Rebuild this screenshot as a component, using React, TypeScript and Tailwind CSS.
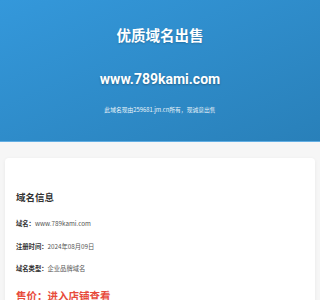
export default function App() {
  const info = [
    { label: '域名：', value: 'www.789kami.com' },
    { label: '注册时间：', value: '2024年08月09日' },
    { label: '域名类型：', value: '企业品牌域名' },
  ];

  return (
    <div className="min-h-screen bg-[#f6f6f6] font-['Noto_Sans_CJK_SC',sans-serif]">
      <header className="h-[142px] flex flex-col items-center pt-[27px] text-white bg-gradient-to-br from-[#3498db] to-[#2980b9] border-b border-[#62aee3]">
        <h1 className="text-[14.5px] leading-[16px] font-bold [text-shadow:0_1px_2px_rgba(0,0,0,0.2)]">优质域名出售</h1>
        <p className="mt-[28px] text-[14px] leading-[16px] font-bold font-['Roboto','Noto_Sans_CJK_SC',sans-serif] [text-shadow:0_1px_2px_rgba(0,0,0,0.3)]">
          www.789kami.com
        </p>
        <p className="mt-[19px] text-[5.8px] leading-[8px] opacity-90">此域名现由259681.jm.cn所有，现诚意出售</p>
      </header>

      <main className="px-[5px] pt-[16px]">
        <section className="bg-white rounded-[4px] shadow-[0_1px_4px_rgba(0,0,0,0.06)] px-[11px] pt-[33px] pb-6">
          <h2 className="text-[9.5px] leading-[12px] font-bold text-[#333]">域名信息</h2>
          <div className="mt-[16px] flex flex-col gap-[12.5px]">
            {info.map((row) => (
              <div key={row.label} className="text-[6.3px] leading-[10px]">
                <span className="font-bold text-[#333]">{row.label}</span>
                <span className="text-[#555]">{row.value}</span>
              </div>
            ))}
          </div>
          <div className="mt-[15px] text-[10.5px] leading-[14px] font-bold text-[#e74c3c]">售价：进入店铺查看</div>
        </section>
      </main>
    </div>
  );
}
